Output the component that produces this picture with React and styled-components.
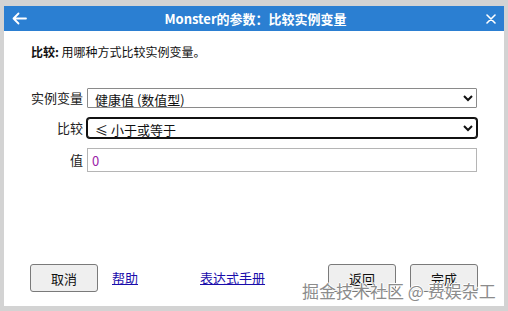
import React from "react";
import styled, { createGlobalStyle } from "styled-components";

const Global = createGlobalStyle`
  html, body { margin: 0; padding: 0; }
  body {
    background: #d3d3d3;
    font-family: "Noto Sans CJK SC", "Noto Sans", sans-serif;
    width: 508px;
    height: 311px;
    overflow: hidden;
  }
`;

const Page = styled.div`
  position: relative;
  width: 508px;
  height: 311px;
  padding: 6px 4px 5px;
  box-sizing: border-box;
`;

const Dialog = styled.div`
  width: 500px;
  height: 300px;
  background: #fff;
  display: flex;
  flex-direction: column;
`;

const TitleBar = styled.div`
  height: 25px;
  background: #2b7fd2;
  display: grid;
  grid-template-columns: 40px 1fr 40px;
  align-items: center;
  color: #fff;
`;

const IconBtn = styled.div`
  display: flex;
  align-items: center;
  justify-content: ${(p) => (p.$end ? "flex-end" : "flex-start")};
  padding: ${(p) => (p.$end ? "0 8px 0 0" : "0 0 0 8px")};
  height: 100%;
`;

const Title = styled.div`
  text-align: center;
  font-size: 13px;
  font-weight: bold;
  line-height: 25px;
  padding-left: 3px;
`;

const Body = styled.div`
  padding: 13px 0 0 27px;
`;

const Desc = styled.div`
  font-size: 12px;
  line-height: 16px;
  color: #111;
  b { font-weight: bold; }
`;

const Form = styled.div`
  margin-top: 28px;
  display: grid;
  grid-template-columns: 75px 1fr;
  column-gap: 4px;
  row-gap: 10px;
  padding: 0 27px 0 4px;
  align-items: center;
`;

const Label = styled.label`
  text-align: right;
  font-size: 13px;
  color: #222;
  line-height: 16px;
`;

const Select = styled.select`
  height: 20px;
  box-sizing: border-box;
  font-family: "Noto Sans CJK SC", "Noto Sans", sans-serif;
  font-size: 13px;
  color: #111;
  background: #fff;
  padding: 0 0 0 3px;
  margin: 0;
  border: 1px solid ${(p) => (p.$focus ? "#111" : "#8a8a8a")};
  border-radius: ${(p) => (p.$focus ? "3px" : "1px")};
  box-shadow: ${(p) => (p.$focus ? "0 0 0 1px #111" : "none")};
  outline: none;
`;

const Input = styled.input`
  height: 24px;
  box-sizing: border-box;
  font-family: "Noto Sans CJK SC", "Noto Sans", sans-serif;
  font-size: 13px;
  color: #9a22a8;
  border: 1px solid #b5b5b5;
  padding: 0 4px;
  margin: 0;
  outline: none;
`;

const Footer = styled.div`
  margin-top: auto;
  display: flex;
  align-items: center;
  padding: 0 26px 14px;
`;

const Button = styled.button`
  width: 68px;
  height: 28px;
  box-sizing: border-box;
  background: #efefef;
  border: 1px solid #7a7a7a;
  border-radius: 3px;
  font-family: "Noto Sans CJK SC", "Noto Sans", sans-serif;
  font-size: 13px;
  color: #111;
  padding: 0;
  margin-left: ${(p) => p.$ml || 0}px;
`;

const Link = styled.a`
  font-size: 13px;
  color: #1a0dab;
  text-decoration: underline;
  margin-left: ${(p) => p.$ml || 0}px;
  line-height: 16px;
`;

const Spacer = styled.div`
  flex: 1;
`;

const Watermark = styled.div`
  position: absolute;
  left: 302px;
  top: 280px;
  font-size: 17px;
  line-height: 22px;
  color: #8c8c8c;
  white-space: nowrap;
  text-shadow: 1px 0 #fff, -1px 0 #fff, 0 1px #fff, 0 -1px #fff;
  pointer-events: none;
`;

export default function App() {
  return (
    <Page>
      <Global />
      <Dialog>
        <TitleBar>
          <IconBtn>
            <svg width="15" height="13" viewBox="0 0 15 13" fill="none" stroke="#fff" strokeWidth="1.8" strokeLinecap="round" strokeLinejoin="round">
              <path d="M14 6.5H1.5M6.5 1.5L1.5 6.5L6.5 11.5" />
            </svg>
          </IconBtn>
          <Title>Monster的参数：比较实例变量</Title>
          <IconBtn $end>
            <svg width="10" height="10" viewBox="0 0 10 10" fill="none" stroke="#fff" strokeWidth="1.6" strokeLinecap="round">
              <path d="M1 1L9 9M9 1L1 9" />
            </svg>
          </IconBtn>
        </TitleBar>
        <Body>
          <Desc>
            <b>比较:</b> 用哪种方式比较实例变量。
          </Desc>
        </Body>
        <Form>
          <Label>实例变量</Label>
          <Select defaultValue="hp">
            <option value="hp">健康值 (数值型)</option>
          </Select>
          <Label>比较</Label>
          <Select $focus defaultValue="le">
            <option value="le">≤ 小于或等于</option>
          </Select>
          <Label>值</Label>
          <Input defaultValue="0" />
        </Form>
        <Footer>
          <Button>取消</Button>
          <Link href="#" $ml={14}>帮助</Link>
          <Link href="#" $ml={62}>表达式手册</Link>
          <Spacer />
          <Button>返回</Button>
          <Button $ml={14}>完成</Button>
        </Footer>
      </Dialog>
      <Watermark>掘金技术社区 @ 费娱杂工</Watermark>
    </Page>
  );
}
